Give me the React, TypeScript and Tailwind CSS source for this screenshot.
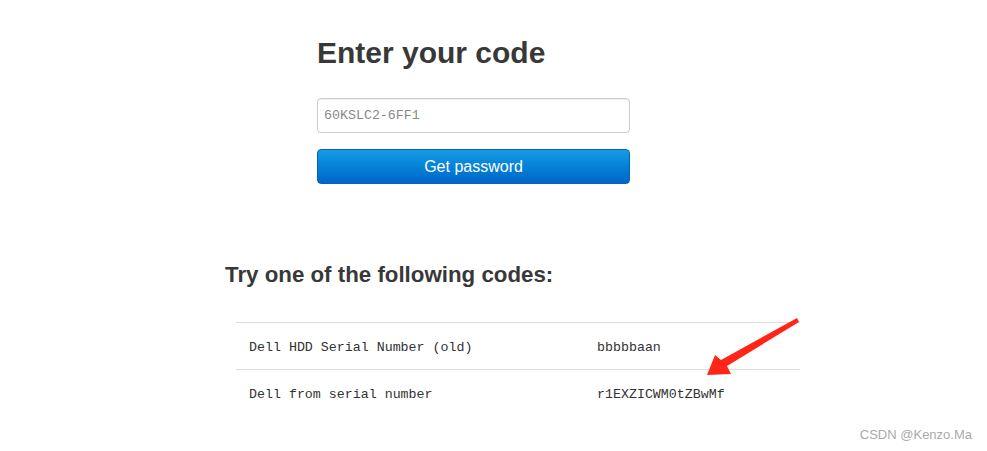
const ROWS = [
  { name: "Dell HDD Serial Number (old)", code: "bbbbbaan" },
  { name: "Dell from serial number", code: "r1EXZICWM0tZBwMf" },
];

export default function App() {
  return (
    <div className="relative h-[451px] w-full overflow-hidden bg-white font-['Liberation_Sans',Arial,sans-serif] text-[#333]">
      <div className="ml-[317px] w-[313px] pt-[36px]">
        <h1 className="text-[30px] font-bold leading-[33px] text-[#383838]">Enter your code</h1>
        <input
          readOnly
          placeholder="60KSLC2-6FF1"
          className="mt-[29px] block h-[35px] w-full rounded-[4px] border border-[#ccc] px-[6px] font-['Liberation_Mono',monospace] text-[13.3px] text-[#555] shadow-[inset_0_1px_1px_rgba(0,0,0,0.06)] outline-none placeholder:text-[#8a8a8a]"
        />
        <button
          type="button"
          className="mt-[16px] block h-[35px] w-full rounded-[4px] border border-[#0a62b6] bg-gradient-to-b from-[#159ce5] to-[#0066c8] text-[16px] leading-[33px] text-white"
        >
          Get password
        </button>
      </div>

      <div className="ml-[225px] mt-[79px]">
        <h2 className="text-[22.3px] font-bold leading-[24px] text-[#383838]">Try one of the following codes:</h2>
        <div className="ml-[11px] mt-[35px] w-[564px] font-['Liberation_Mono',monospace] text-[13.3px] text-[#333]">
          {ROWS.map((r) => (
            <div key={r.name} className="flex h-[47px] items-center border-t border-[#ddd] pt-[3px]">
              <div className="w-[361px] pl-[13px]">{r.name}</div>
              <div>{r.code}</div>
            </div>
          ))}
        </div>
      </div>

      {/* annotation arrow */}
      <svg className="absolute left-0 top-0" width="987" height="451" viewBox="0 0 987 451">
        <polygon points="797,318 799,322 727,366 731,374 707,375 715,355 721,360" fill="#ff2618" />
      </svg>

      <div className="absolute bottom-[8px] right-[15px] text-[13px] leading-[16px] text-[#aaa]">CSDN @Kenzo.Ma</div>
    </div>
  );
}
